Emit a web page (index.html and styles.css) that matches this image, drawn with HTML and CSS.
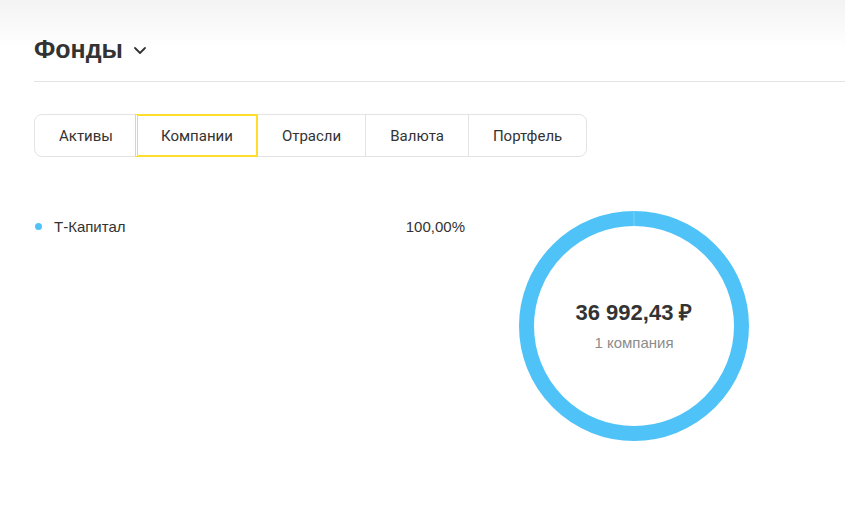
FILE: index.html
```html
<!DOCTYPE html>
<html lang="ru">
<head>
    <meta charset="UTF-8">
    <meta name="viewport" content="width=device-width, initial-scale=1.0">
    <title>Фонды</title>
    <link rel="stylesheet" href="styles.css">
</head>
<body>
    <div class="page">
        <header class="header">
            <h1 class="title">
                Фонды
                <svg class="chevron" width="14" height="9" viewBox="0 0 14 9" aria-hidden="true">
                    <path d="M2 2l5 5 5-5" fill="none" stroke="#333" stroke-width="1.8" stroke-linecap="round" stroke-linejoin="round"/>
                </svg>
            </h1>
        </header>

        <nav class="tabs">
            <button class="tab">Активы</button>
            <button class="tab active">Компании</button>
            <button class="tab">Отрасли</button>
            <button class="tab">Валюта</button>
            <button class="tab">Портфель</button>
        </nav>

        <section class="content">
            <ul class="legend">
                <li class="legend-row">
                    <span class="dot"></span>
                    <span class="legend-name">Т-Капитал</span>
                    <span class="legend-value">100,00%</span>
                </li>
            </ul>

            <div class="chart">
                <svg width="230" height="230" viewBox="0 0 230 230">
                    <circle cx="115" cy="115" r="107.5" fill="none" stroke="#4fc3f7" stroke-width="15"/>
                    <line x1="115" y1="0" x2="115" y2="15" stroke="#9adcfa" stroke-width="0.6"/>
                </svg>
                <div class="chart-label">
                    <div class="chart-sum">36 992,43 ₽</div>
                    <div class="chart-count">1 компания</div>
                </div>
            </div>
        </section>
    </div>
</body>
</html>
```

FILE: styles.css
```css
:root {
    --text-color: #333333;
    --muted-color: #8c8c8c;
    --border-color: #e3e3e3;
    --accent: #ffdd2d;
    --ring: #4fc3f7;
}

body {
    margin: 0;
    font-family: 'Liberation Sans', Arial, sans-serif;
    color: var(--text-color);
    background: #ffffff linear-gradient(#f3f3f3, #ffffff 48px) no-repeat;
    background-size: 100% 48px;
    min-height: 100vh;
}

.page {
    padding-left: 34px;
}

.header {
    height: 82px;
    box-sizing: border-box;
    padding-top: 35px;
    border-bottom: 1px solid var(--border-color);
}

.title {
    display: flex;
    align-items: center;
    margin: 0;
    font-size: 25px;
    line-height: 28px;
    font-weight: bold;
}

.chevron {
    margin-left: 10px;
    margin-top: 2px;
}

.tabs {
    display: inline-flex;
    margin-top: 32px;
    border: 1px solid var(--border-color);
    border-radius: 8px;
    background: #ffffff;
}

.tab {
    height: 41px;
    padding: 0 24px;
    border: none;
    border-left: 1px solid var(--border-color);
    background: none;
    font-family: Roboto, sans-serif;
    font-size: 15px;
    color: var(--text-color);
    cursor: pointer;
}

.tab:first-child {
    padding-right: 23px;
    border-left: none;
    border-radius: 8px 0 0 8px;
}

.tab:last-child {
    border-radius: 0 8px 8px 0;
}

.tab.active {
    border-left-color: transparent;
    box-shadow: 0 0 0 1px var(--accent), inset 0 0 0 1px var(--accent);
    position: relative;
    z-index: 1;
}

.tab.active + .tab {
    border-left-color: transparent;
}

.content {
    display: flex;
    gap: 54px;
    margin-top: 54px;
}

.legend {
    width: 431px;
    margin: 0;
    padding: 5px 0 0;
    list-style: none;
}

.legend-row {
    display: flex;
    align-items: center;
    height: 20px;
    font-size: 15px;
}

.dot {
    width: 7px;
    height: 7px;
    margin-left: 1px;
    margin-right: 12px;
    border-radius: 50%;
    background: var(--ring);
}

.legend-value {
    margin-left: auto;
}

.chart {
    position: relative;
    width: 230px;
    height: 230px;
}

.chart svg {
    display: block;
}

.chart-label {
    position: absolute;
    inset: 0;
    display: flex;
    flex-direction: column;
    align-items: center;
    justify-content: center;
    padding-bottom: 1px;
}

.chart-sum {
    font-size: 22px;
    font-weight: bold;
    line-height: 26px;
}

.chart-count {
    margin-top: 8px;
    font-size: 15px;
    color: var(--muted-color);
}
```
